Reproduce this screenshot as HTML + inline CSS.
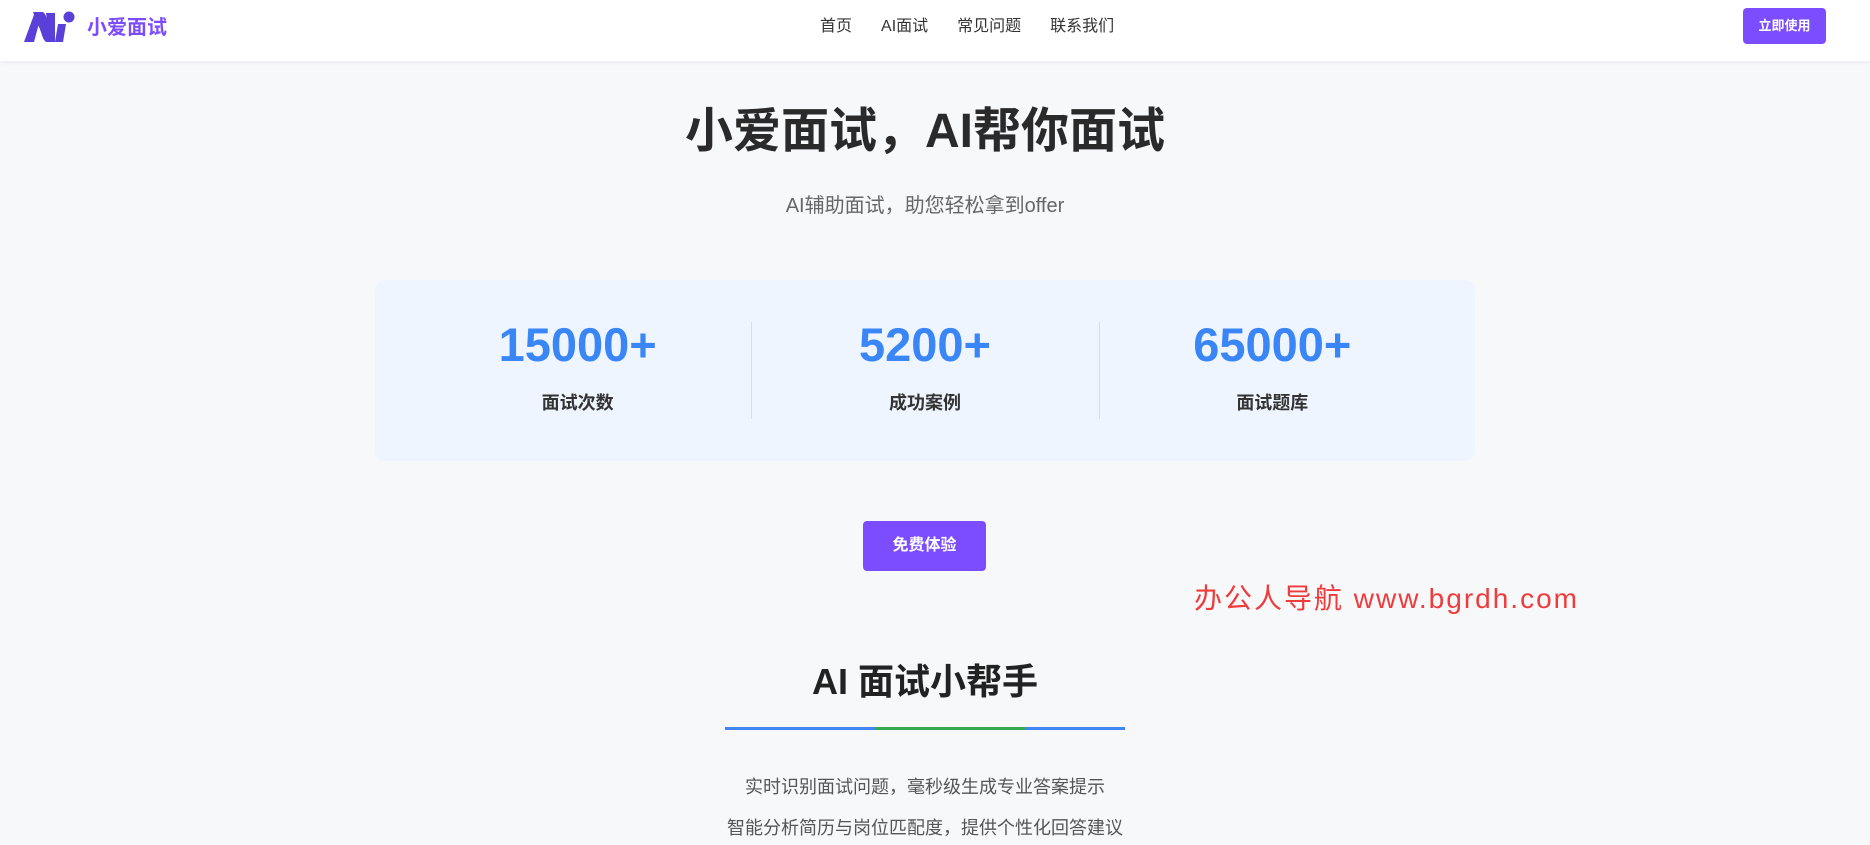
<!DOCTYPE html>
<html><head><meta charset="utf-8">
<style>
*{margin:0;padding:0;box-sizing:border-box}
body{width:1870px;height:845px;overflow:hidden;background:#f7f8fa;font-family:"Liberation Sans","Noto Sans CJK SC",sans-serif;position:relative}
.hdr{position:absolute;left:0;top:0;width:1870px;height:61px;background:#fff;box-shadow:0 1px 4px rgba(0,0,0,.06)}
.logo{position:absolute;left:24px;top:10px}
.brand{position:absolute;left:87px;top:15px;font-size:20px;font-weight:bold;color:#7c4dff;line-height:26px}
.nav{position:absolute;left:820px;top:16px;font-size:16px;color:#333;line-height:22px;white-space:nowrap}
.nav span{margin-right:29px}
.btn1{position:absolute;left:1743px;top:8px;width:83px;height:36px;background:#7c4dff;color:#fff;border-radius:4px;font-size:13px;font-weight:bold;text-align:center;line-height:36px}
.c{position:absolute;left:0;width:1850px;text-align:center}
.h1{top:100px;font-size:48px;font-weight:bold;color:#2a2a2a;line-height:64px}
.sub{top:192px;font-size:20px;color:#666;line-height:28px}
.stats{position:absolute;left:375px;top:280px;width:1100px;height:181px;background:#eef5fe;border-radius:10px;padding:0 29px;display:flex}
.col{flex:1;position:relative;text-align:center}
.col+.col:before{content:"";position:absolute;left:0;top:42px;height:97px;width:1px;background:#d9dde3}
.num{margin-top:33px;font-size:47px;font-weight:bold;color:#3b86f7;line-height:64px}
.lbl{margin-top:13px;font-size:18px;font-weight:bold;color:#333;line-height:26px}
.btn2{position:absolute;left:863px;top:521px;width:123px;height:50px;background:#7c4dff;border-radius:4px;color:#fff;font-size:16px;font-weight:bold;text-align:center;line-height:50px}
.wm{position:absolute;left:1194px;top:582px;font-size:28px;letter-spacing:2px;color:#ef3b3b;line-height:34px;white-space:nowrap}
.h2{top:658px;font-size:36px;font-weight:bold;color:#222;line-height:48px}
.line{position:absolute;left:725px;top:727px;width:400px;height:3px;background:linear-gradient(90deg,#4285f4 0 150px,#34a853 150px 300px,#4285f4 300px)}
.p{font-size:18px;color:#555;line-height:26px}
</style></head><body>
<div class="hdr">
<svg class="logo" width="52" height="34" viewBox="0 0 52 34">
<path d="M0,32 L10,32 L17,6 L11,2 Z" fill="#5a3fd8"/>
<path d="M9,2 L19,2 Q22,4 24,12 L31,32 L22,32 Q19,30 17,22 Z" fill="#5a3fd8"/>
<path d="M22,3 L31,3 L31,32 L26,32 Z" fill="#5a3fd8"/>
<path d="M34,14 L42,14 L39,32 L31,32 Z" fill="#5a3fd8"/>
<circle cx="45" cy="7" r="5.5" fill="#5a3fd8"/>
</svg>
<div class="brand">小爱面试</div>
<div class="nav"><span>首页</span><span>AI面试</span><span>常见问题</span><span>联系我们</span></div>
<div class="btn1">立即使用</div>
</div>
<div class="c h1">小爱面试，AI帮你面试</div>
<div class="c sub">AI辅助面试，助您轻松拿到offer</div>
<div class="stats">
<div class="col"><div class="num">15000+</div><div class="lbl">面试次数</div></div>
<div class="col"><div class="num">5200+</div><div class="lbl">成功案例</div></div>
<div class="col"><div class="num">65000+</div><div class="lbl">面试题库</div></div>
</div>
<div class="btn2">免费体验</div>
<div class="wm">办公人导航 www.bgrdh.com</div>
<div class="c h2">AI 面试小帮手</div>
<div class="line"></div>
<div class="c p" style="top:774px">实时识别面试问题，毫秒级生成专业答案提示</div>
<div class="c p" style="top:815px">智能分析简历与岗位匹配度，提供个性化回答建议</div>
</body></html>
